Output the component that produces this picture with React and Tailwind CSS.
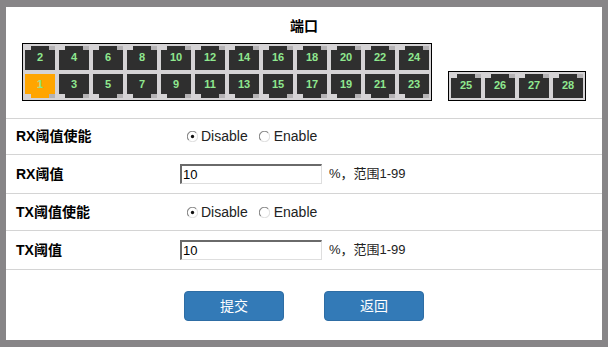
import React from "react";

const FONT = { fontFamily: '"Liberation Sans", "Noto Sans CJK SC", sans-serif' };

function Port({ n, pos = "top", active = false }) {
  const body = active ? "bg-[#ffa500]" : "bg-[#2f2f2f]";
  const tab = (
    <div className="flex h-[4px]">
      <div className="w-[6px]" />
      <div className={`w-[18px] ${body}`} />
      <div className="w-[6px] bg-[#b4b2b4]" />
    </div>
  );
  return (
    <div className="relative flex flex-col w-[30px] h-[24px]">
      {pos === "top" && tab}
      <div className={`h-[20px] ${body}`} />
      {pos === "bottom" && tab}
      <div
        className={`absolute left-0 right-0 flex items-center justify-center text-[11px] font-bold leading-none text-[#8fe88f] ${
          pos === "top" ? "top-0 h-[23px]" : "top-0 h-[20px]"
        }`}
        style={{ fontFamily: '"Liberation Sans", sans-serif' }}
      >
        {n}
      </div>
    </div>
  );
}

function Radio({ checked }) {
  return (
    <svg width="11" height="11" viewBox="0 0 12 12" className="shrink-0">
      <circle cx="6" cy="6" r="5.3" fill="#ffffff" />
      <path d="M10 2 A5.3 5.3 0 0 0 2 10" fill="none" stroke="#8a8a8a" strokeWidth="1.2" />
      <path d="M2 10 A5.3 5.3 0 0 0 10 2" fill="none" stroke="#e2e2e2" strokeWidth="1.2" />
      {checked && <circle cx="6" cy="6" r="1.8" fill="#111" />}
    </svg>
  );
}

function RadioGroup() {
  return (
    <div className="flex items-center pl-[7px] text-[14px] text-[#222]">
      <Radio checked />
      <span className="ml-[3px]">Disable</span>
      <span className="ml-[11px]" />
      <Radio />
      <span className="ml-[4px]">Enable</span>
    </div>
  );
}

function Input() {
  return (
    <div className="flex items-center text-[13px] text-[#222]">
      <div className="w-[142px] h-[20px] border-t-2 border-l-2 border-t-[#6a6a6a] border-l-[#6a6a6a] border-b border-r border-b-[#dedede] border-r-[#dedede] bg-white flex items-center pl-[1px] text-[13px] text-black">
        10
      </div>
      <span className="ml-[7px]">%，范围1-99</span>
    </div>
  );
}

function Row({ label, h, children }) {
  return (
    <div className={`flex items-center border-b border-[#d4d4d4] ${h}`}>
      <div className="w-[174px] pl-[10px] text-[14px] font-bold text-black">{label}</div>
      <div>{children}</div>
    </div>
  );
}

export default function App() {
  const top = [2, 4, 6, 8, 10, 12, 14, 16, 18, 20, 22, 24];
  const bottom = [1, 3, 5, 7, 9, 11, 13, 15, 17, 19, 21, 23];
  const right = [25, 26, 27, 28];
  return (
    <div
      className="w-[608px] h-[347px] box-border border-x-[6px] border-y-[7px] border-[#878587] bg-white flex flex-col"
      style={FONT}
    >
      <div className="h-[36px] pt-[11px] text-center text-[14px] leading-[16px] font-bold text-black">端口</div>
      <div className="flex justify-center items-end gap-[16px] h-[58px]">
        <div className="border border-black bg-[#d5d3d5] p-[2px] flex flex-col gap-[4px]">
          <div className="flex gap-[4px]">
            {top.map((n) => (
              <Port key={n} n={n} pos="top" />
            ))}
          </div>
          <div className="flex gap-[4px]">
            {bottom.map((n) => (
              <Port key={n} n={n} pos="bottom" active={n === 1} />
            ))}
          </div>
        </div>
        <div className="border border-black bg-[#d5d3d5] p-[2px] flex gap-[4px]">
          {right.map((n) => (
            <Port key={n} n={n} pos="top" />
          ))}
        </div>
      </div>
      <div className="mt-[17px] border-t border-[#d4d4d4]">
        <Row label="RX阈值使能" h="h-[36px]">
          <RadioGroup />
        </Row>
        <Row label="RX阈值" h="h-[39px]">
          <Input />
        </Row>
        <Row label="TX阈值使能" h="h-[37px]">
          <RadioGroup />
        </Row>
        <Row label="TX阈值" h="h-[39px]">
          <Input />
        </Row>
      </div>
      <div className="mt-[21px] flex justify-center gap-[40px]">
        <button className="w-[100px] h-[30px] rounded-[4px] bg-[#337ab7] border border-[#2e6da4] text-white text-[14px]">
          提交
        </button>
        <button className="w-[100px] h-[30px] rounded-[4px] bg-[#337ab7] border border-[#2e6da4] text-white text-[14px]">
          返回
        </button>
      </div>
    </div>
  );
}
